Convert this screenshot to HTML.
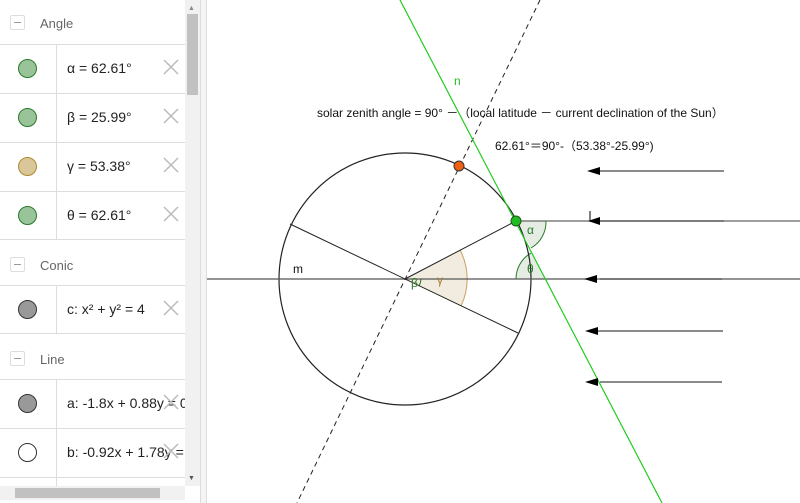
<!DOCTYPE html>
<html><head><meta charset="utf-8"><style>
body{margin:0;width:800px;height:503px;overflow:hidden;background:#fff;font-family:"Liberation Sans","Noto Sans CJK SC",sans-serif;position:relative}
.p{position:absolute;left:0;top:0;width:185px;height:486px;overflow:hidden}
.h{position:absolute;left:0;width:185px;height:44px;font-size:13px;color:#666}
.h .b{position:absolute;left:10px;top:15px;width:13px;height:13px;border:1px solid #ddd;border-radius:2px}
.h .b:after{content:"";position:absolute;left:3px;top:6px;width:7px;height:1px;background:#999}
.h span{position:absolute;left:40px;top:16px}
.r{position:absolute;left:0;width:185px;height:49px;border-top:1px solid #ddd;box-sizing:border-box}
.r .c{position:absolute;left:18px;top:14px;width:19px;height:19px;border-radius:50%;box-sizing:border-box}
.r .v{position:absolute;left:56px;top:0;bottom:0;border-left:1px solid #ddd}
.r .t{position:absolute;left:67px;top:15px;font-size:14px;color:#222;white-space:nowrap}
.r svg{position:absolute;left:163px;top:14px}
</style></head><body>
<div class="p">
<div class="h" style="top:0"><div class="b"></div><span>Angle</span></div>
<div class="r" style="top:44px"><div class="c" style="background:#99c499;border:1px solid #2a7a2a"></div><div class="v"></div><div class="t">α = 62.61°</div><svg width="16" height="16"><path d="M1 1L15 15M15 1L1 15" stroke="#bbb" stroke-width="1.5"/></svg></div>
<div class="r" style="top:93px"><div class="c" style="background:#99c499;border:1px solid #2a7a2a"></div><div class="v"></div><div class="t">β = 25.99°</div><svg width="16" height="16"><path d="M1 1L15 15M15 1L1 15" stroke="#bbb" stroke-width="1.5"/></svg></div>
<div class="r" style="top:142px"><div class="c" style="background:#d9c699;border:1px solid #b08a30"></div><div class="v"></div><div class="t">γ = 53.38°</div><svg width="16" height="16"><path d="M1 1L15 15M15 1L1 15" stroke="#bbb" stroke-width="1.5"/></svg></div>
<div class="r" style="top:191px;border-bottom:1px solid #ddd"><div class="c" style="background:#99c499;border:1px solid #2a7a2a"></div><div class="v"></div><div class="t">θ = 62.61°</div><svg width="16" height="16"><path d="M1 1L15 15M15 1L1 15" stroke="#bbb" stroke-width="1.5"/></svg></div>
<div class="h" style="top:242px"><div class="b"></div><span>Conic</span></div>
<div class="r" style="top:285px;border-bottom:1px solid #ddd"><div class="c" style="background:#999;border:1px solid #333"></div><div class="v"></div><div class="t">c: x² + y² = 4</div><svg width="16" height="16"><path d="M1 1L15 15M15 1L1 15" stroke="#bbb" stroke-width="1.5"/></svg></div>
<div class="h" style="top:336px"><div class="b"></div><span>Line</span></div>
<div class="r" style="top:379px"><div class="c" style="background:#999;border:1px solid #333"></div><div class="v"></div><div class="t">a: -1.8x + 0.88y = 0</div><svg width="16" height="16"><path d="M1 1L15 15M15 1L1 15" stroke="#bbb" stroke-width="1.5"/></svg></div>
<div class="r" style="top:428px"><div class="c" style="background:#fff;border:1px solid #333"></div><div class="v"></div><div class="t">b: -0.92x + 1.78y = 0</div><svg width="16" height="16"><path d="M1 1L15 15M15 1L1 15" stroke="#bbb" stroke-width="1.5"/></svg></div>
<div class="r" style="top:477px"><div class="v"></div></div>
</div>
<div style="position:absolute;left:185px;top:0;width:15px;height:486px;background:#f1f1f1"></div>
<div style="position:absolute;left:187px;top:14px;width:11px;height:81px;background:#c1c1c1"></div>
<div style="position:absolute;left:188px;top:5px;font-size:7px;color:#888">▲</div>
<div style="position:absolute;left:188px;top:475px;font-size:7px;color:#555">▼</div>
<div style="position:absolute;left:0;top:486px;width:185px;height:14px;background:#f1f1f1"></div>
<div style="position:absolute;left:15px;top:488px;width:145px;height:10px;background:#c1c1c1"></div>
<div style="position:absolute;left:200px;top:0;width:7px;height:503px;background:#f4f4f4;border-left:1px solid #ddd;border-right:1px solid #ddd;box-sizing:border-box"></div>
<svg style="position:absolute;left:0;top:0" width="800" height="503">
<g fill="none">
<path d="M405 279 L460 250 A62 62 0 0 1 461 306 Z" fill="#f2ece0" stroke="none"/>
<path d="M460 250 A62 62 0 0 1 461 306" stroke="#c9a060"/>
<path d="M516 221 L546 221 A30 30 0 0 1 531 248 Z" fill="#e4ece4" stroke="none"/>
<path d="M546 221 A30 30 0 0 1 531 248" stroke="#2a7a2a"/>
<path d="M546 279 L516 279 A30 30 0 0 1 531 253 Z" fill="#e4ece4" stroke="none"/>
<path d="M516 279 A30 30 0 0 1 531 253" stroke="#2a7a2a"/>
<path d="M419 286 A16 16 0 0 0 421 279" stroke="#2a7a2a"/>
<circle cx="405" cy="279" r="126" stroke="#222" stroke-width="1.2"/>
<line x1="207" y1="279" x2="800" y2="279" stroke="#555" stroke-width="1.3"/>
<line x1="516" y1="221" x2="800" y2="221" stroke="#666" stroke-width="1.3"/>
<line x1="405" y1="279" x2="516" y2="221" stroke="#222"/>
<line x1="290" y1="224" x2="518" y2="333" stroke="#222"/>
<line x1="540" y1="0" x2="297" y2="503" stroke="#222" stroke-dasharray="5,4"/>
<line x1="400" y1="0" x2="662" y2="503" stroke="#22cc22" stroke-width="1.2"/>
<g stroke="#444" stroke-width="1.3">
<line x1="600" y1="171" x2="724" y2="171"/><line x1="600" y1="221" x2="724" y2="221"/><line x1="600" y1="279" x2="722" y2="279"/><line x1="598" y1="331" x2="723" y2="331"/><line x1="600" y1="382" x2="722" y2="382"/>
</g>
<g fill="#000">
<path d="M587 171 L600 167 L600 175Z"/><path d="M588 221 L600 217 L600 225Z"/><path d="M584 279 L597 275 L597 283Z"/><path d="M585 331 L598 327 L598 335Z"/><path d="M585 382 L598 378 L598 386Z"/>
</g>
<line x1="590" y1="211" x2="590" y2="221" stroke="#000"/>
<circle cx="459" cy="166" r="5" fill="#f06010" stroke="#333"/>
<circle cx="516" cy="221" r="5" fill="#22bb22" stroke="#1a5a1a"/>
</g>
<g font-family="Liberation Sans, Noto Sans CJK SC, sans-serif">
<text x="454" y="85" font-size="12" fill="#22bb22">n</text>
<text x="317" y="117" font-size="12" fill="#111">solar zenith angle = 90° －（local latitude － current declination of the Sun）</text>
<text x="495" y="150" font-size="12" fill="#111">62.61°＝90°-（53.38°-25.99°)</text>
<text x="293" y="273" font-size="12" fill="#111">m</text>
<text x="527" y="234" font-size="12" fill="#2a7a2a">α</text>
<text x="527" y="273" font-size="12" fill="#2a7a2a">θ</text>
<text x="411" y="287" font-size="12" fill="#2a7a2a">β</text>
<text x="437" y="284" font-size="12" fill="#a07a30">γ</text>
</g>
</svg>
</body></html>
